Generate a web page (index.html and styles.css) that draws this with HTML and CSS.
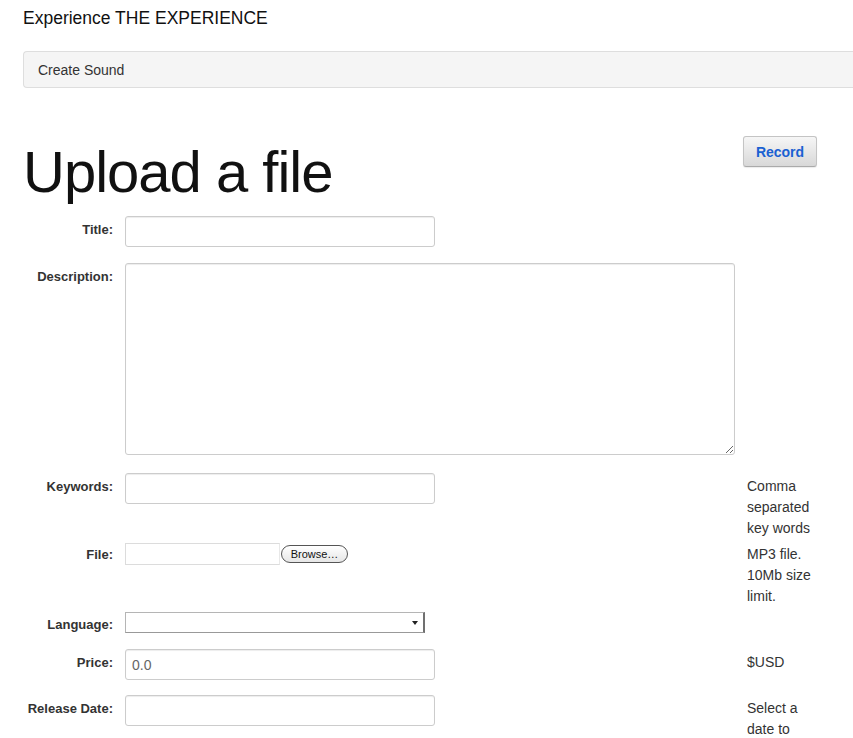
FILE: index.html
```html
<!DOCTYPE html>
<html lang="en">
<head>
<meta charset="utf-8">
<title>Upload a file</title>
<link rel="stylesheet" href="styles.css">
</head>
<body>
<div class="page">
  <div class="brand">Experience THE EXPERIENCE</div>
  <div class="navbar"><span class="nav-item">Create Sound</span></div>

  <div class="title-row">
    <h1 class="page-title">Upload a file</h1>
    <button class="btn-record" type="button">Record</button>
  </div>

  <form class="upload-form">
    <div class="form-row row-title">
      <label class="control-label">Title:</label>
      <div class="control"><input class="text-input" type="text"></div>
      <div class="help"></div>
    </div>

    <div class="form-row row-desc">
      <label class="control-label">Description:</label>
      <div class="control"><textarea class="text-area"></textarea></div>
      <div class="help"></div>
    </div>

    <div class="form-row row-keywords">
      <label class="control-label">Keywords:</label>
      <div class="control"><input class="text-input" type="text"></div>
      <div class="help">Comma separated key words</div>
    </div>

    <div class="form-row row-file">
      <label class="control-label label-file">File:</label>
      <div class="control file-control">
        <span class="file-box"></span>
        <span class="file-btn">Browse…</span>
      </div>
      <div class="help help-file">MP3 file. 10Mb size limit.</div>
    </div>

    <div class="form-row row-lang">
      <label class="control-label label-lang">Language:</label>
      <div class="control">
        <div class="select-box"><span class="select-arrow"></span></div>
      </div>
      <div class="help"></div>
    </div>

    <div class="form-row row-price">
      <label class="control-label">Price:</label>
      <div class="control"><input class="text-input" type="text" value="0.0"></div>
      <div class="help">$USD</div>
    </div>

    <div class="form-row row-date">
      <label class="control-label">Release Date:</label>
      <div class="control"><input class="text-input" type="text"></div>
      <div class="help">Select a date to</div>
    </div>
  </form>
</div>
</body>
</html>
```

FILE: styles.css
```css
html, body {
  margin: 0;
  padding: 0;
  background: #fff;
  overflow: hidden;
}

body {
  font-family: "Liberation Sans", Arial, sans-serif;
  color: #333;
}

.page {
  padding-left: 23px;
  width: 830px;
}

.brand {
  height: 36px;
  line-height: 36px;
  font-size: 17.5px;
  color: #111;
}

.navbar {
  margin-top: 15px;
  height: 35px;
  line-height: 35px;
  background: #f5f5f5;
  border: 1px solid #dedede;
  border-right: none;
  border-radius: 4px 0 0 4px;
  padding-left: 14px;
}

.nav-item {
  font-size: 14px;
  color: #333;
}

.title-row {
  display: flex;
  align-items: flex-start;
  justify-content: space-between;
  width: 794px;
  margin-top: 48px;
}

.page-title {
  margin: 3px 0 0 0;
  font-weight: normal;
  font-size: 58px;
  line-height: 65px;
  letter-spacing: -1px;
  color: #111;
}

.btn-record {
  width: 74px;
  height: 31px;
  padding: 0;
  font-family: "Liberation Sans", Arial, sans-serif;
  font-size: 14px;
  font-weight: bold;
  color: #1a60d2;
  background: linear-gradient(#f6f6f6, #d8d8d8);
  border: 1px solid #c4c4c4;
  border-bottom-color: #aaa;
  border-radius: 3px;
  box-shadow: 0 1px 1px rgba(0, 0, 0, 0.08);
}

.upload-form {
  margin-top: 12px;
}

.form-row {
  display: grid;
  grid-template-columns: 90px 610px 75px;
  column-gap: 12px;
  align-items: start;
}

.row-title { margin-bottom: 16px; }
.row-desc { margin-bottom: 18px; }
.row-keywords { margin-bottom: 4.5px; }
.row-file { margin-bottom: 5.5px; }
.row-lang { margin-bottom: 14px; }
.row-price { margin-bottom: 15px; }

.control-label {
  text-align: right;
  font-size: 13px;
  font-weight: bold;
  line-height: 20px;
  padding-top: 4px;
  color: #333;
}

.label-file { padding-top: 2px; }
.label-lang { padding-top: 3px; }

.text-input {
  box-sizing: border-box;
  width: 310px;
  height: 31px;
  padding: 4px 6px;
  font-family: "Liberation Sans", Arial, sans-serif;
  font-size: 14px;
  color: #666;
  border: 1px solid #ccc;
  border-radius: 3px;
  box-shadow: inset 0 1px 1px rgba(0, 0, 0, 0.075);
  background: #fff;
  outline: none;
}

.text-area {
  display: block;
  box-sizing: border-box;
  width: 610px;
  height: 192px;
  border: 1px solid #ccc;
  border-radius: 3px;
  box-shadow: inset 0 1px 1px rgba(0, 0, 0, 0.075);
  background: #fff;
  font-family: "Liberation Sans", Arial, sans-serif;
  font-size: 14px;
  outline: none;
}

.help {
  font-size: 14px;
  line-height: 21px;
  padding-top: 2.5px;
  color: #333;
}

.help-file { padding-top: 0.5px; }

.file-control {
  display: flex;
  align-items: center;
  gap: 1px;
}

.file-box {
  box-sizing: border-box;
  width: 155px;
  height: 22px;
  border: 1px solid #dcdcdc;
  border-right-color: #e8e8e8;
  background: #fff;
}

.file-btn {
  box-sizing: border-box;
  width: 67px;
  height: 18px;
  line-height: 16px;
  text-align: center;
  font-size: 11px;
  color: #111;
  border: 1px solid #555;
  border-radius: 9px;
  background: linear-gradient(#ffffff, #e6e6e6);
}

.select-box {
  position: relative;
  box-sizing: border-box;
  width: 300px;
  height: 21px;
  border: 1px solid #b5b5b5;
  border-right: 2px solid #707070;
  border-bottom-color: #999;
  background: #fff;
}

.select-arrow {
  position: absolute;
  right: 5px;
  top: 8px;
  width: 0;
  height: 0;
  border-left: 3px solid transparent;
  border-right: 3px solid transparent;
  border-top: 4px solid #222;
}
```
